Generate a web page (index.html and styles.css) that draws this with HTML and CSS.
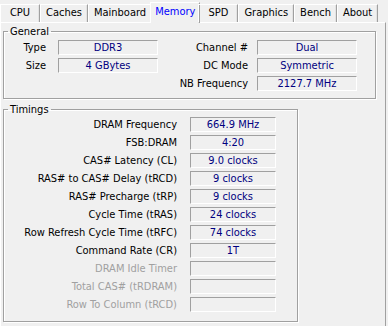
FILE: index.html
```html
<!DOCTYPE html>
<html>
<head>
    <meta charset="utf-8">
    <title>Memory</title>
    <link rel="stylesheet" href="styles.css">
</head>
<body>
    <ul class="tabs">
        <li class="tab">CPU</li>
        <li class="tab">Caches</li>
        <li class="tab">Mainboard</li>
        <li class="tab active">Memory</li>
        <li class="tab">SPD</li>
        <li class="tab">Graphics</li>
        <li class="tab">Bench</li>
        <li class="tab">About</li>
    </ul>

    <div class="panel">
        <fieldset class="group general">
            <legend>General</legend>
            <div class="general-grid">
                <span class="label">Type</span>
                <span class="value">DDR3</span>
                <span class="label label-right">Channel #</span>
                <span class="value">Dual</span>

                <span class="label">Size</span>
                <span class="value">4 GBytes</span>
                <span class="label label-right">DC Mode</span>
                <span class="value">Symmetric</span>

                <span class="label"></span>
                <span></span>
                <span class="label label-right">NB Frequency</span>
                <span class="value">2127.7 MHz</span>
            </div>
        </fieldset>

        <fieldset class="group timings">
            <legend>Timings</legend>
            <div class="timings-grid">
                <span class="label">DRAM Frequency</span>
                <span class="value">664.9 MHz</span>
                <span class="label">FSB:DRAM</span>
                <span class="value">4:20</span>
                <span class="label">CAS# Latency (CL)</span>
                <span class="value">9.0 clocks</span>
                <span class="label">RAS# to CAS# Delay (tRCD)</span>
                <span class="value">9 clocks</span>
                <span class="label">RAS# Precharge (tRP)</span>
                <span class="value">9 clocks</span>
                <span class="label">Cycle Time (tRAS)</span>
                <span class="value">24 clocks</span>
                <span class="label">Row Refresh Cycle Time (tRFC)</span>
                <span class="value">74 clocks</span>
                <span class="label">Command Rate (CR)</span>
                <span class="value">1T</span>
                <span class="label disabled">DRAM Idle Timer</span>
                <span class="value"></span>
                <span class="label disabled">Total CAS# (tRDRAM)</span>
                <span class="value"></span>
                <span class="label disabled">Row To Column (tRCD)</span>
                <span class="value"></span>
            </div>
        </fieldset>
    </div>
</body>
</html>
```

FILE: styles.css
```css
* {
    box-sizing: border-box;
}

body {
    margin: 0;
    width: 388px;
    height: 326px;
    overflow: hidden;
    background: #f0f0f0;
    font-family: "DejaVu Sans Condensed", "DejaVu Sans", sans-serif;
    font-size: 11px;
    color: #000;
}

/* tab strip */
.tabs {
    display: flex;
    align-items: flex-end;
    height: 22px;
    margin: 0;
    padding: 0;
    list-style: none;
    position: relative;
    z-index: 1;
}

.tab {
    flex: none;
    min-width: 40px;
    height: 18px;
    padding: 0 5px;
    line-height: 16px;
    text-align: center;
    border: 1px solid #fff;
    border-right-color: #a0a0a0;
    border-bottom: none;
    box-shadow: inset -1px 0 0 #e3e3e3;
}

.tab.active {
    height: 21px;
    margin: 0 -2px -1px;
    padding: 0 4px;
    line-height: 18px;
    color: #0000ff;
    background: #f0f0f0;
}

.panel {
    height: 304px;
    width: 386px;
    padding: 2px 0 0 2px;
    border-top: 1px solid #fff;
    border-left: 1px solid #fff;
    border-right: 1px solid #a0a0a0;
}

/* group boxes */
.group {
    margin: 0;
    padding: 0;
    border: 1px solid #a0a0a0;
    box-shadow: inset 1px 1px 0 #fff, 1px 1px 0 #fff;
}

.group legend {
    margin-left: 4px;
    padding: 0 2px;
    line-height: 13px;
}

.general {
    width: 373px;
    height: 74px;
    padding: 2px 0 0;
}

.timings {
    width: 295px;
    height: 219px;
    margin-top: 4px;
    padding: 1px 0 0;
}

.label {
    text-align: right;
    line-height: 15px;
    white-space: nowrap;
}

.label.disabled {
    color: #a0a0a0;
}

.value {
    height: 15px;
    line-height: 13px;
    text-align: center;
    color: #000080;
    border: 1px solid;
    border-color: #a0a0a0 #fff #fff #a0a0a0;
    white-space: nowrap;
}

.general-grid {
    display: grid;
    grid-template-columns: 54px 100px 99px 100px;
    row-gap: 3px;
}

.general-grid .label {
    padding-right: 12px;
}

.general-grid .label-right {
    padding-right: 9px;
}

.timings-grid {
    display: grid;
    grid-template-columns: 186px 86px;
    row-gap: 3px;
}

.timings-grid .label {
    padding-right: 13px;
}
```
